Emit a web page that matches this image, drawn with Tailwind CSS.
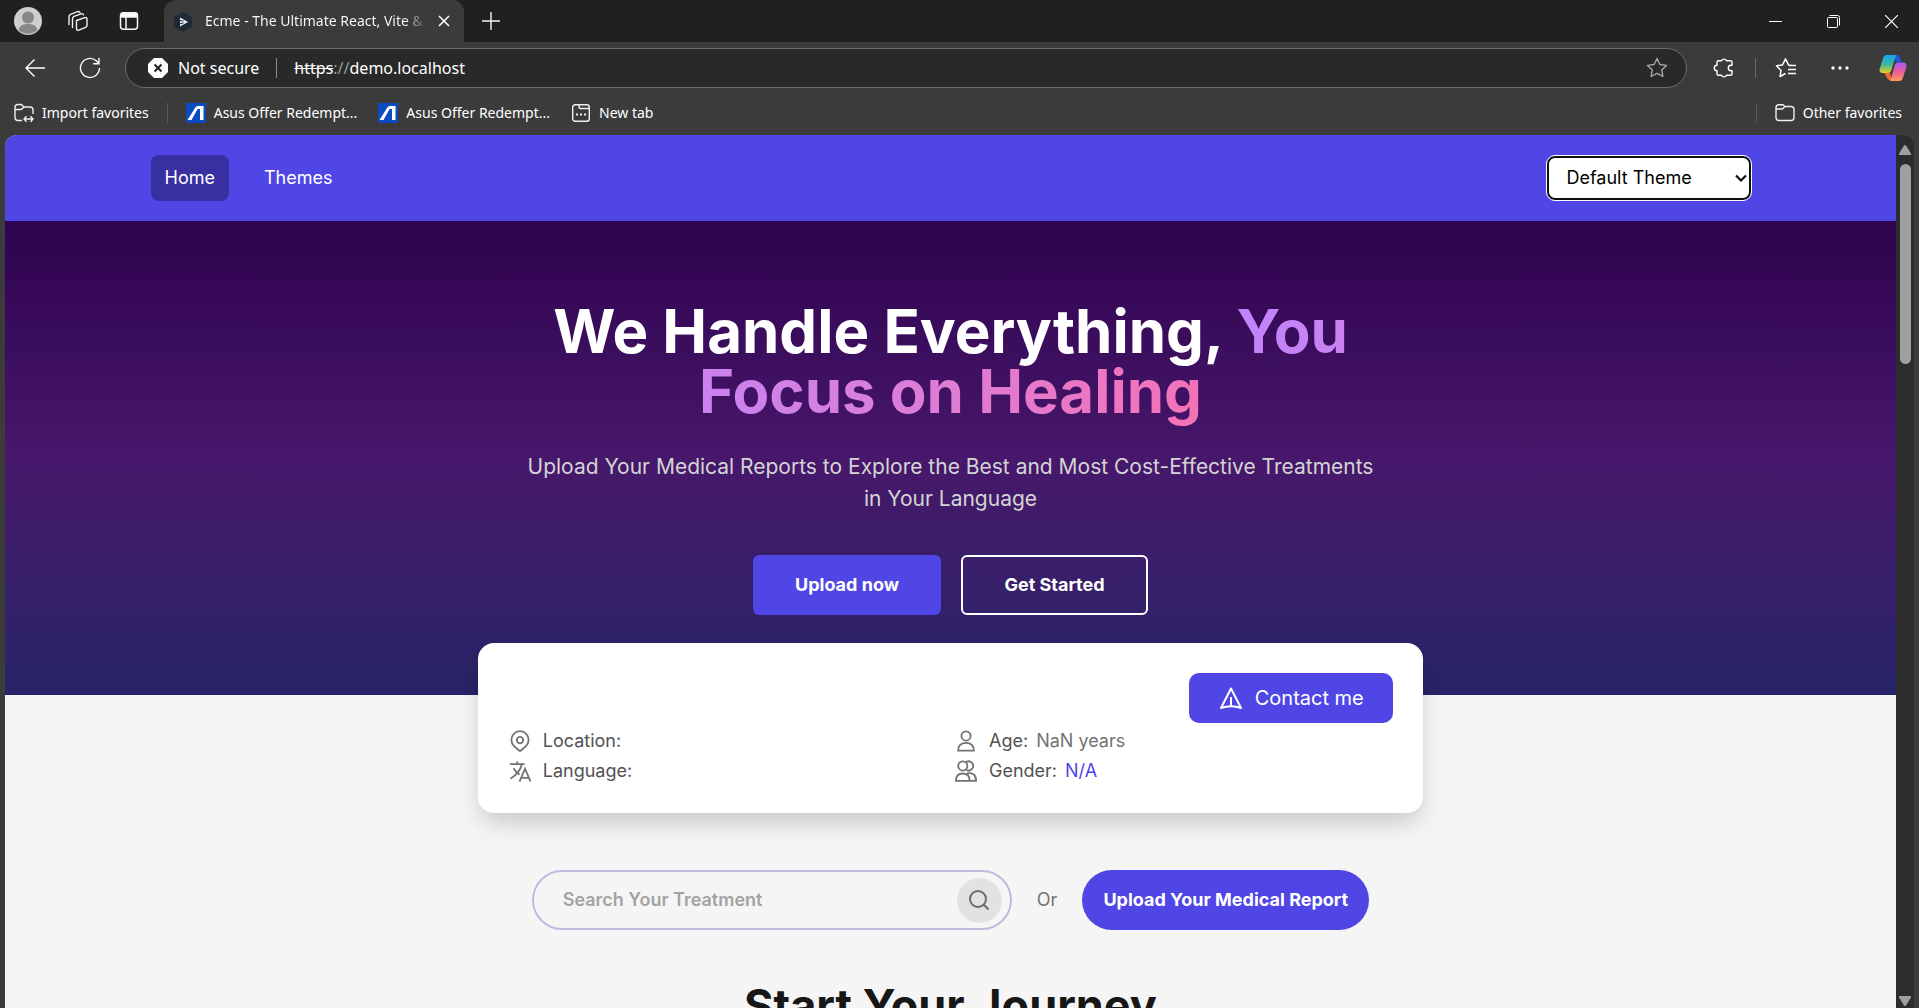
<!DOCTYPE html>
<html lang="en">
<head>
<meta charset="utf-8">
<title>Ecme - The Ultimate React, Vite</title>
<script src="https://cdn.jsdelivr.net/npm/@tailwindcss/browser@4"></script>
</head>
<body class="flex h-screen flex-col overflow-hidden bg-[#3b3b3b] font-['Noto_Sans',sans-serif] text-sm text-white">

<!-- Tab strip -->
<header class="flex h-[42px] shrink-0 items-center bg-[#202020]">
  <div class="flex w-[164px] items-center gap-6 pl-[14px]">
    <button aria-label="Profile"><svg class="size-7" viewBox="0 0 28 28"><circle cx="14" cy="14" r="14" fill="#d0cecc"/><circle cx="14" cy="10.500" r="6" fill="#8a8886"/><path d="M4.500 23c1-4.500 5-6 9.500-6s8.500 1.500 9.500 6a14 14 0 0 1-19 0z" fill="#8a8886"/></svg></button>
    <button aria-label="Workspaces"><svg class="size-6" viewBox="0 0 24 24" fill="none" stroke="#f0f0f0" stroke-width="1.400" stroke-linejoin="round" stroke-linecap="round"><path d="M10.500 11.500 18 8.800q3-1 3 1.500v6q0 1.500-1.500 2l-6 2.600q-3 1-3-1.500zM6.500 18.500V9.500q0-1.500 1.500-2.200L15 4.800q2-.6 2.500 1M3 15.500V7.500q0-1.500 1.500-2.200L11.500 2.600q2-.6 2.500 1"/></svg></button>
    <button aria-label="Tab actions" class="ml-[5px]"><svg class="size-5" viewBox="0 0 20 20" fill="none" stroke="#f5f5f5" stroke-width="1.500"><rect x="1.500" y="1.800" width="17" height="16.500" rx="3"/><path d="M7 6v12"/><path d="M2 3.500q0-1.500 2-1.500h12q2 0 2 1.500v2.500H2z" fill="#fff"/></svg></button>
  </div>
  <div class="flex h-full w-[300px] items-center rounded-t-xl bg-[#3b3b3b] pr-[14px] pl-[10px]">
    <svg class="mt-px h-5 w-[18px] shrink-0" viewBox="0 0 18 20"><path d="M9 0l9 5v10l-9 5-9-5V5z" fill="#1f2937"/><path d="M6 5.500 14 10l-8 4.500z" fill="#e8edf2"/><path d="M5 8.200l4.500 1M5 12l4.500-1" stroke="#1f2937"/></svg>
    <span class="ml-[13px] w-[222px] overflow-hidden bg-linear-to-r from-white from-90% to-[#3b3b3b] bg-clip-text whitespace-nowrap text-transparent">Ecme - The Ultimate React, Vite &amp;</span>
    <button aria-label="Close tab" class="ml-auto"><svg class="size-3" viewBox="0 0 12 12" stroke="#fff" stroke-width="1.500"><path d="M1 1l10 10M11 1 1 11"/></svg></button>
  </div>
  <button aria-label="New tab" class="ml-[18px]"><svg class="size-[18px]" viewBox="0 0 18 18" stroke="#f5f5f5" stroke-width="1.400"><path d="M9 0v18M0 9h18"/></svg></button>
  <div class="ml-auto flex items-center gap-[45px] pr-[21px]">
    <button aria-label="Minimize"><svg class="size-[13px]" viewBox="0 0 13 13" stroke="#fff"><path d="M0 6.500h13"/></svg></button>
    <button aria-label="Restore"><svg class="size-[13px]" viewBox="0 0 13 13" fill="none" stroke="#fff"><rect x=".5" y="2.500" width="10" height="10" rx="1"/><path d="M2.500.5h8q2 0 2 2v8"/></svg></button>
    <button aria-label="Close"><svg class="size-[13px]" viewBox="0 0 13 13" stroke="#fff" stroke-width="1.200"><path d="M0 0l13 13M13 0 0 13"/></svg></button>
  </div>
</header>

<!-- Toolbar -->
<div class="flex h-[52px] shrink-0 items-center pr-3 pl-6">
  <button aria-label="Back"><svg class="h-5 w-[22px]" viewBox="0 0 22 20" fill="none" stroke="#fff" stroke-width="1.400"><path d="M21 10H2M10.500 1.500 2 10l8.500 8.500"/></svg></button>
  <button aria-label="Refresh" class="ml-[33px]"><svg class="size-[22px]" viewBox="0 0 22 22" fill="none" stroke="#fff" stroke-width="1.400"><path d="M20.500 11a9.500 9.500 0 1 1-3.200-7.200L20 6.500M20 1v5.800h-5.800"/></svg></button>
  <div class="ml-6 flex h-10 min-w-0 flex-1 items-center rounded-full border border-[#6b6b6b] bg-[#292929] pr-[18px] pl-[22px]">
    <svg class="size-[20px] shrink-0" viewBox="0 0 20 20"><path d="M6 0h8l6 6v8l-6 6H6l-6-6V6z" fill="#fff"/><path d="m6.500 6.500 7 7m0-7-7 7" stroke="#222" stroke-width="2"/></svg>
    <span class="ml-[10px] text-base">Not secure</span>
    <span class="mx-[17px] h-5 w-px bg-[#8a8a8a]"></span>
    <a href="#" class="text-base"><span class="line-through">https</span><span class="text-[#999]">://</span>demo.localhost</a>
    <button aria-label="Add to favorites" class="ml-auto"><svg class="size-[22px]" viewBox="0 0 22 22" fill="none" stroke="#a5a5a5" stroke-width="1.400" stroke-linejoin="round"><path d="m11 1.500 2.900 6 6.600.9-4.800 4.600 1.200 6.500-5.900-3.100-5.900 3.100 1.200-6.500L1.500 8.400l6.600-.9z"/></svg></button>
  </div>
  <div class="ml-[26px] flex items-center">
    <button aria-label="Extensions"><svg class="size-[22px]" viewBox="0 0 22 22" fill="none" stroke="#fff" stroke-width="1.400" stroke-linejoin="round"><path d="M5.500 3.800h3a2.700 2.700 0 0 1 5 0h4q1.500 0 1.500 1.500v3h-1a2.700 2.700 0 0 0 0 5.400h1v3q0 1.500-1.500 1.500h-4a2.700 2.700 0 0 1-5 0h-3Q4 18.200 4 16.700v-3a2.700 2.700 0 0 1 0-5.400v-3q0-1.500 1.500-1.500z"/></svg></button>
    <span class="ml-5 h-5 w-px bg-[#6a6a6a]"></span>
    <button aria-label="Favorites" class="ml-[19px]"><svg class="size-[22px]" viewBox="0 0 22 22" fill="none" stroke="#fff" stroke-width="1.500" stroke-linejoin="round"><path d="M10.500 16.500 5 19.500 6 13.500 1.500 8.800l6-.9 3-6 3 6 3.500.6M14 8.500h7M13 12.500h8M13 16.500h8"/></svg></button>
    <button aria-label="More" class="ml-[33px]"><svg class="h-4 w-5" viewBox="0 0 20 16" fill="#fff"><circle cx="3" cy="8" r="1.700"/><circle cx="10" cy="8" r="1.700"/><circle cx="17" cy="8" r="1.700"/></svg></button>
    <button aria-label="Copilot" class="ml-[29px]"><svg class="size-7" viewBox="0 0 28 28">
      <defs>
        <linearGradient id="ca" x1="0" y1="0" x2="0" y2="1"><stop offset="0" stop-color="#19a5f0"/><stop offset=".5" stop-color="#34b9a0"/><stop offset="1" stop-color="#e9cf1d"/></linearGradient>
        <linearGradient id="cb" x1="0" y1="0" x2="0" y2="1"><stop offset="0" stop-color="#a55cf0"/><stop offset=".5" stop-color="#ea5c9c"/><stop offset="1" stop-color="#ff9a58"/></linearGradient>
      </defs>
      <path d="M14 1h4q2 0 3 3l1.500 4.500H17z" fill="#1d58d8"/><path d="M5 18.500h6L13 26H11q-2.500 0-3.500-3z" fill="#f3652f"/>
      <path d="M7.500 1h8q1 0 2 1-1.500 1-2.500 5l-2.500 9q-1 3-4 3H3.500Q0 19 .6 15L4 4.500Q5 1 7.500 1z" fill="url(#ca)"/>
      <path d="M20.500 27h-8q-1.500 0-2-.8 1.500-1 2.500-5l2.500-9.400q1-3.300 4-3.300h5Q28 8.500 27.400 13L24 23.500Q23 27 20.500 27z" fill="url(#cb)"/></svg></button>
  </div>
</div>

<!-- Favorites bar -->
<nav aria-label="Favorites bar" class="flex h-[41px] shrink-0 items-center pr-[17px] pb-[4px] pl-[14px]">
  <a href="#" class="flex items-center gap-2"><svg class="size-5" viewBox="0 0 20 20" fill="none" stroke="#f0f0f0" stroke-width="1.400" stroke-linejoin="round"><path d="M8 17.500H4q-3 0-3-3v-10q0-3 3-3h3.500l2.500 2.500h6q3 0 3 3v4M1 6.500h5q1.500 0 2.500-1L10 4M10 16h9m-6.500-2.700L10 16l2.500 2.700m4-5.400L19 16l-2.500 2.700"/></svg>Import favorites</a>
  <span class="ml-[18px] h-5 w-px bg-[#5a5a5a]"></span>
  <a href="#" class="ml-[18px] flex items-center gap-2"><svg class="size-5" viewBox="0 0 20 20"><rect width="20" height="20" rx="1" fill="#0b4bc0"/><path d="M1.500 17 9 5Q10 3 12 3h5.500v14H14V6h-1.500Q11.500 6 11 7L5.500 17z" fill="#fff"/></svg>Asus Offer Redempt...</a>
  <a href="#" class="ml-[21px] flex items-center gap-2"><svg class="size-5" viewBox="0 0 20 20"><rect width="20" height="20" rx="1" fill="#0b4bc0"/><path d="M1.500 17 9 5Q10 3 12 3h5.500v14H14V6h-1.500Q11.500 6 11 7L5.500 17z" fill="#fff"/></svg>Asus Offer Redempt...</a>
  <a href="#" class="ml-[21px] flex items-center gap-2"><svg class="size-5" viewBox="0 0 20 20" fill="none" stroke="#f0f0f0" stroke-width="1.400"><rect x="1.700" y="1.700" width="16.600" height="16.600" rx="2.500"/><path d="M8 2v2q0 1.500 1.500 1.500H18"/><path d="M5 11.500h2m2 0h2m2 0h2" stroke-width="2"/></svg>New tab</a>
  <span class="ml-auto h-5 w-px bg-[#5a5a5a]"></span>
  <a href="#" class="ml-[18px] flex items-center gap-2"><svg class="size-5" viewBox="0 0 20 20" fill="none" stroke="#f0f0f0" stroke-width="1.400" stroke-linejoin="round"><path d="M1 5.500v9q0 3 3 3h12q3 0 3-3v-8q0-3-3-3h-6L8 1.700H4q-3 0-3 3zM1 6h5q1.500 0 2.500-1L10 3.500"/></svg>Other favorites</a>
</nav>

<div class="flex min-h-0 flex-1 px-[5px]">
  <div class="min-w-0 flex-1 overflow-hidden rounded-tl-xl bg-[#f5f5f5] font-[Inter,sans-serif] text-lg text-[#525252]">

    <nav class="flex h-[86px] items-center bg-[#4f46e5] text-white">
      <div class="mx-auto flex w-full max-w-[1600px] items-center">
        <a href="#" class="flex h-[46px] items-center rounded-lg bg-[#372fa2] px-[14px]">Home</a>
        <a href="#" class="ml-5 px-[15px]">Themes</a>
        <div class="relative ml-auto">
          <select aria-label="Theme" class="h-[44px] w-[204px] appearance-none rounded-lg border-2 border-[#101010] bg-white pl-[18px] text-black outline outline-white">
            <option>Default Theme</option>
          </select>
          <svg class="pointer-events-none absolute top-[18px] right-[4px] h-[9px] w-3" viewBox="0 0 12 9" fill="none" stroke="#101010" stroke-width="2.200"><path d="m1 1.500 5 5 5-5"/></svg>
        </div>
      </div>
    </nav>

    <section class="flex h-[474px] flex-col items-center bg-linear-to-b from-[#2f034f] via-[#47176b] to-[#262467] pt-20 text-center">
      <h1 class="w-[864px] text-[60px] leading-[60px] font-bold text-white">We Handle Everything, <span class="bg-linear-to-r from-[#c084fc] to-[#f472b6] bg-clip-text text-transparent">You Focus on Healing</span></h1>
      <p class="mt-[30px] w-[864px] text-[21px] leading-8 text-[#d4d4d4]">Upload Your Medical Reports to Explore the Best and Most Cost-Effective Treatments in Your Language</p>
      <div class="mt-10 flex gap-5 font-bold text-white">
        <button class="h-[60px] w-[188px] rounded-md bg-[#4f46e5]">Upload now</button>
        <button class="h-[60px] w-[187px] rounded-md border-2 border-white">Get Started</button>
      </div>
    </section>

    <section class="relative mx-auto -mt-[52px] h-[170px] w-1/2 rounded-2xl bg-white px-[30px] pt-[30px] shadow-[0_12px_24px_-4px_rgb(0_0_0/0.2)]">
      <div class="flex justify-end">
        <button class="flex h-[50px] w-[204px] items-center justify-center gap-3 rounded-[10px] bg-[#4f46e5] text-xl text-white">
          <svg class="size-6" viewBox="0 0 24 24" fill="none" stroke="currentColor" stroke-width="2" stroke-linejoin="round"><path d="M12 2.500 22 22q-10-3.500-20 0z"/><path d="M12 11v9"/></svg>Contact me</button>
      </div>
      <dl class="grid grid-cols-2 gap-x-2 pt-[3px] pl-px leading-[30px]">
        <div class="flex items-center gap-2">
          <svg class="mr-1 size-[22px] text-[#737373]" viewBox="0 0 24 24" fill="none" stroke="currentColor" stroke-width="2"><circle cx="12" cy="11" r="3.500"/><path d="m18.400 17.600-5 4.500a2 2 0 0 1-2.800 0l-5-4.500a9.400 9.400 0 1 1 12.800 0z"/></svg>
          <dt>Location:</dt><dd></dd>
        </div>
        <div class="flex items-center gap-2">
          <svg class="mr-1 size-[22px] text-[#737373]" viewBox="0 0 24 24" fill="none" stroke="currentColor" stroke-width="2"><circle cx="12" cy="6.500" r="5"/><path d="M3.500 22.500q0-8.500 8.500-8.500t8.500 8.500z"/></svg>
          <dt>Age:</dt><dd class="text-[#737373]">NaN years</dd>
        </div>
        <div class="flex items-center gap-2">
          <svg class="mr-1 size-[22px] text-[#737373]" viewBox="0 0 24 24" fill="none" stroke="currentColor" stroke-width="2"><path d="M1 4.500h16M9 1.500v3M14 4.500Q12 14 1.500 20.500M5 9q3 5 6.500 7M11.500 23.500l6-14 6 14M13.500 19.500h8"/></svg>
          <dt>Language:</dt><dd></dd>
        </div>
        <div class="flex items-center gap-2">
          <svg class="mr-1 size-[22px] text-[#737373]" viewBox="0 0 24 24" fill="none" stroke="currentColor" stroke-width="2"><circle cx="8.500" cy="6.500" r="5"/><path d="M12 2.300a5 5 0 1 1 0 8.400M1 22.700q0-8 7.500-8t7.500 8zM13 14.500q10-1.500 10 8.200h-7"/></svg>
          <dt>Gender:</dt><dd class="text-[#4f46e5]">N/A</dd>
        </div>
      </dl>
    </section>

    <form class="mt-[57px] flex items-center justify-center">
      <label class="flex h-[60px] w-[480px] items-center rounded-full border-2 border-[#c2bade] pr-2 pl-[29px]">
        <span class="sr-only">Search treatment</span>
        <input type="search" placeholder="Search Your Treatment" class="min-w-0 flex-1 bg-transparent font-semibold outline-none placeholder:text-[#a3a3a3]">
        <button type="button" aria-label="Search" class="flex size-[45px] items-center justify-center rounded-full bg-[#e2e2e2] text-[#6b6b6b]"><svg class="size-[22px]" viewBox="0 0 22 22" fill="none" stroke="currentColor" stroke-width="2"><circle cx="10" cy="10" r="8"/><path d="m15.800 15.800 4.700 4.700"/></svg></button>
      </label>
      <span class="mx-[25px] text-[#737373]">Or</span>
      <button type="button" class="h-[60px] w-[287px] rounded-full bg-[#4f46e5] font-bold text-white">Upload Your Medical Report</button>
    </form>

    <h2 class="mt-[46px] text-center text-[45px] leading-[60px] font-bold text-[#171717]">Start Your Journey</h2>
  </div>

  <!-- Scrollbar -->
  <div class="flex w-[18px] flex-col items-center rounded-tr-xl bg-[#2c2c2c] pt-[10px] pb-[2px]">
    <svg class="h-[10px] w-3" viewBox="0 0 12 10" fill="#9f9f9f"><path d="M6 0q.6 0 1 .6l5 7.900q.3 1.500-1 1.500H1q-1.300 0-1-1.500L5 .6Q5.400 0 6 0z"/></svg>
    <div class="mt-[9px] h-[200px] w-[11px] rounded-full bg-[#9f9f9f]"></div>
    <svg class="mt-auto h-[10px] w-3 rotate-180" viewBox="0 0 12 10" fill="#9f9f9f"><path d="M6 0q.6 0 1 .6l5 7.900q.3 1.500-1 1.500H1q-1.300 0-1-1.500L5 .6Q5.400 0 6 0z"/></svg>
  </div>
</div>
</body>
</html>
